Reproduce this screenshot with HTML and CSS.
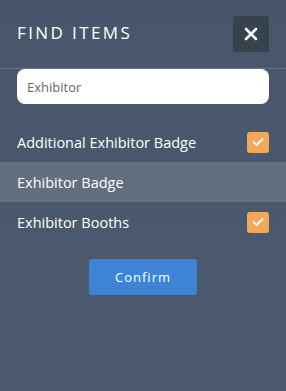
FILE: index.html
```html
<!DOCTYPE html>
<html lang="en">
<head>
    <meta charset="UTF-8">
    <meta name="viewport" content="width=device-width, initial-scale=1.0">
    <title>Find Items</title>
    <link rel="stylesheet" href="styles.css">
</head>
<body>
    <div class="panel">
        <div class="header">
            <h1 class="title">FIND ITEMS</h1>
            <button class="close" aria-label="Close">
                <svg width="14" height="14" viewBox="0 0 14 14">
                    <path d="M2 2 L12 12 M12 2 L2 12" stroke="#fff" stroke-width="2.6" stroke-linecap="round"/>
                </svg>
            </button>
        </div>
        <div class="search">
            <input type="text" value="Exhibitor">
        </div>
        <ul class="items">
            <li class="item">
                <span>Additional Exhibitor Badge</span>
                <span class="check">
                    <svg width="12" height="10" viewBox="0 0 12 10">
                        <path d="M1.5 5.2 L4.5 8 L10.5 2" fill="none" stroke="#fff" stroke-width="1.8" stroke-linecap="round" stroke-linejoin="round"/>
                    </svg>
                </span>
            </li>
            <li class="item active">
                <span>Exhibitor Badge</span>
            </li>
            <li class="item">
                <span>Exhibitor Booths</span>
                <span class="check">
                    <svg width="12" height="10" viewBox="0 0 12 10">
                        <path d="M1.5 5.2 L4.5 8 L10.5 2" fill="none" stroke="#fff" stroke-width="1.8" stroke-linecap="round" stroke-linejoin="round"/>
                    </svg>
                </span>
            </li>
        </ul>
        <div class="actions">
            <button class="confirm">Confirm</button>
        </div>
    </div>
</body>
</html>
```

FILE: styles.css
```css
body {
    margin: 0;
    font-family: 'Open Sans', sans-serif;
    background: #4a5668;
    color: #fff;
}
.panel {
    min-height: 391px;
    background: linear-gradient(180deg, #48556a, #4c5a6e);
}
.header {
    display: flex;
    justify-content: space-between;
    align-items: center;
    height: 68px;
    padding: 0 17px;
    border-bottom: 1px solid #6b7686;
}
.title {
    margin: -3px 0 0;
    font-size: 17px;
    font-weight: 400;
    letter-spacing: 2.4px;
}
.close {
    display: flex;
    align-items: center;
    justify-content: center;
    width: 36px;
    height: 36px;
    padding: 0;
    border: none;
    border-radius: 3px;
    background: #37424f;
}
.search {
    padding: 0 17px;
}
.search input {
    box-sizing: border-box;
    width: 100%;
    height: 35px;
    padding: 0 10px;
    border: none;
    border-radius: 8px;
    font-family: 'Open Sans', sans-serif;
    font-size: 13px;
    color: #666;
    outline: none;
}
.items {
    list-style: none;
    margin: 18px 0 0;
    padding: 0;
}
.item {
    display: flex;
    justify-content: space-between;
    align-items: center;
    height: 40px;
    padding: 0 17px;
    font-size: 14.5px;
}
.item.active {
    background: #636e7e;
}
.check {
    display: flex;
    align-items: center;
    justify-content: center;
    width: 22px;
    height: 21px;
    border-radius: 3px;
    background: #f0a95b;
}
.actions {
    display: flex;
    justify-content: center;
    padding-top: 17px;
}
.confirm {
    width: 108px;
    height: 36px;
    border: none;
    border-radius: 3px;
    background: #3e83d4;
    color: #fff;
    font-family: 'Open Sans', sans-serif;
    font-size: 13px;
    letter-spacing: 1px;
}
```
